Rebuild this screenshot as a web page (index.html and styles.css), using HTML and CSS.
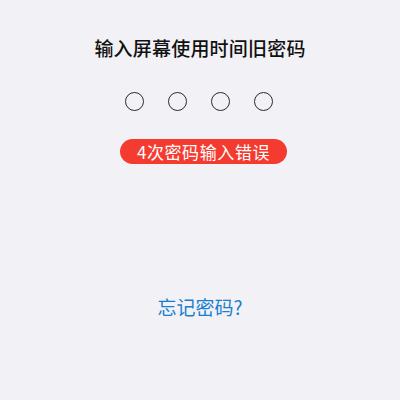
FILE: index.html
```html
<!DOCTYPE html>
<html>
	<head>
		<meta http-equiv="content-type" content="text/html; charset=utf-8">
		<title>输入屏幕使用时间旧密码</title>
		<link rel="stylesheet" href="styles.css">
	</head>
	<body>
		<div class="screen">
			<div class="title">输入屏幕使用时间旧密码</div>

			<div class="dots">
				<span class="dot"></span>
				<span class="dot"></span>
				<span class="dot"></span>
				<span class="dot"></span>
			</div>

			<div class="error">4次密码输入错误</div>

			<div class="forgot">忘记密码?</div>
		</div>
	</body>
</html>
```

FILE: styles.css
```css
body {
	margin: 0px;
	padding: 0px;
	background-color: #f2f1f6;
	font-family: "Noto Sans CJK SC", "Noto Sans", sans-serif;
}

.screen {
	width: 400px;
	height: 400px;
	display: flex;
	flex-direction: column;
	align-items: center;
}

.title {
	margin-top: 35px;
	font-size: 19px;
	line-height: 26px;
	font-weight: 500;
	color: #111111;
	letter-spacing: 0.2px;
}

.dots {
	display: flex;
	gap: 23.7px;
	margin-top: 31px;
	margin-left: -2px;
}

.dot {
	width: 17px;
	height: 17px;
	border: 1.5px solid #2a2a2a;
	border-radius: 50%;
}

.error {
	margin-top: 28px;
	margin-left: 7px;
	width: 167px;
	height: 25px;
	line-height: 25px;
	text-align: center;
	border-radius: 13px;
	background-color: #f43b30;
	color: #ffffff;
	font-size: 17px;
	letter-spacing: 0.6px;
}

.forgot {
	margin-top: 131px;
	font-size: 19px;
	line-height: 24px;
	color: #1a7fcf;
}
```
